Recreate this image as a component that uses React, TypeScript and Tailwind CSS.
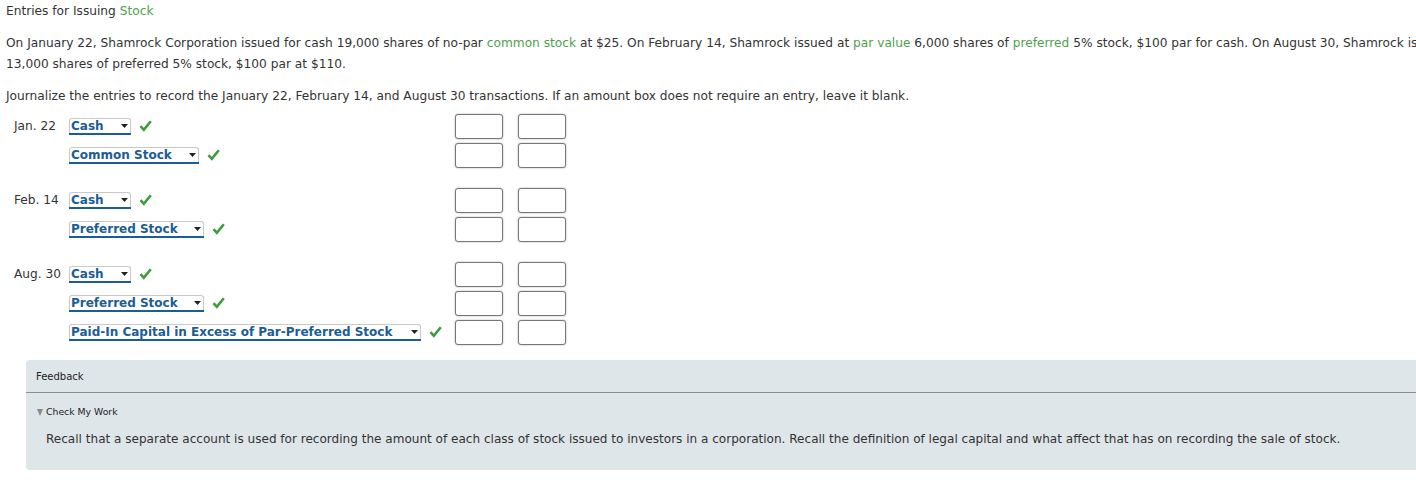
import React from "react";

const font = { fontFamily: '"DejaVu Sans", Verdana, sans-serif' };

function Check() {
  return (
    <svg width="13" height="12" viewBox="0 0 13 12" className="shrink-0">
      <path d="M1.5 6.2 L4.8 9.8 L11.8 1.2" fill="none" stroke="#3d9a3d" strokeWidth="2.6" />
    </svg>
  );
}

function Select({ label, w }: { label: string; w: string }) {
  return (
    <div className={`relative h-[15px] ${w} bg-white border border-[#c9c9c9] rounded-t-[3px] border-b-0 flex items-center`}>
      <span className="pl-[1px] text-[12px] font-bold text-[#1b5d94] leading-none">{label}</span>
      <svg width="7" height="4" viewBox="0 0 7 4" className="absolute right-[2px] top-[5px]">
        <path d="M0 0 L7 0 L3.5 4 Z" fill="#222" />
      </svg>
      <div className="absolute left-[-1px] right-[-1px] bottom-[-2px] h-[2px] bg-[#1b5d94]" />
    </div>
  );
}

function Box() {
  return <div className="w-[48px] h-[25px] bg-white border border-[#777] rounded-[3px] shadow-[0_0_2px_rgba(0,0,0,0.35)]" />;
}

function Row({ date, label, w }: { date?: string; label: string; w: string }) {
  return (
    <div className="flex items-center h-[25px]">
      <div className="w-[69px] pl-[14px] text-[12.2px] text-[#333]">{date}</div>
      <div className="w-[386px] flex items-center gap-[8px] -mt-[2px]">
        <Select label={label} w={w} />
        <Check />
      </div>
      <Box />
      <div className="w-[15px]" />
      <Box />
    </div>
  );
}

export default function App() {
  return (
    <div className="w-[1416px] h-[487px] overflow-hidden bg-white" style={font}>
      <div className="w-[1500px] text-[12.2px] text-[#333]">
        <div className="pl-[6px] pt-[2px] leading-[18px]">
          Entries for Issuing <span className="text-[#4ea24e]">Stock</span>
        </div>
        <p className="pl-[6px] mt-[13px] leading-[21px] w-[1490px]">
          On January 22, Shamrock Corporation issued for cash 19,000 shares of no-par{" "}
          <span className="text-[#4ea24e]">common stock</span> at $25. On February 14, Shamrock issued at{" "}
          <span className="text-[#4ea24e]">par value</span> 6,000 shares of{" "}
          <span className="text-[#4ea24e]">preferred</span> 5% stock, $100 par for cash. On August 30, Shamrock issued 13,000 shares of preferred 5% stock, $100 par at $110.
        </p>
        <p className="pl-[6px] mt-[11px] leading-[21px]">
          Journalize the entries to record the January 22, February 14, and August 30 transactions. If an amount box does not require an entry, leave it blank.
        </p>
        <div className="mt-[7px] flex flex-col gap-[20px]">
          <div className="flex flex-col gap-[4px]">
            <Row date="Jan. 22" label="Cash" w="w-[62px]" />
            <Row label="Common Stock" w="w-[130px]" />
          </div>
          <div className="flex flex-col gap-[4px]">
            <Row date="Feb. 14" label="Cash" w="w-[62px]" />
            <Row label="Preferred Stock" w="w-[135px]" />
          </div>
          <div className="flex flex-col gap-[4px]">
            <Row date="Aug. 30" label="Cash" w="w-[62px]" />
            <Row label="Preferred Stock" w="w-[135px]" />
            <Row label="Paid-In Capital in Excess of Par-Preferred Stock" w="w-[352px]" />
          </div>
        </div>
        <div className="ml-[26px] mt-[15px] w-[1440px] h-[110px] bg-[#dfe6e9] rounded-l-[4px]">
          <div className="pl-[10px] pt-[11px] text-[10px] leading-[12px] text-[#222] pb-[9px] border-b border-[#8a8f92]">
            Feedback
          </div>
          <div className="pl-[11px] pt-[13px] flex items-center gap-[3px] text-[9.3px] leading-[12px] text-[#222]">
            <svg width="6" height="7" viewBox="0 0 6 7"><path d="M0 0 L6 0 L3 7 Z" fill="#8a8a8a" /></svg>
            <span>Check My Work</span>
          </div>
          <p className="pl-[20px] pt-[13px] text-[12.05px] leading-[16px] text-[#333]">
            Recall that a separate account is used for recording the amount of each class of stock issued to investors in a corporation. Recall the definition of legal capital and what affect that has on recording the sale of stock.
          </p>
        </div>
      </div>
    </div>
  );
}
